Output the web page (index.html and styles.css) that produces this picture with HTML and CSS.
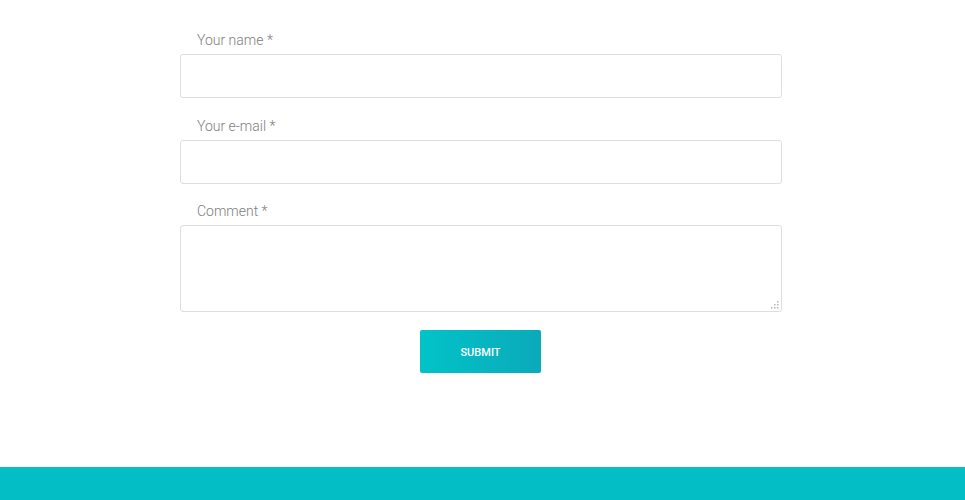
FILE: index.html
```html
<!DOCTYPE html>
<html lang="en">
<head>
<meta charset="utf-8">
<title>Comment form</title>
<link rel="stylesheet" href="styles.css">
</head>
<body>
<main class="page">
  <form class="comment-form">
    <div class="field">
      <label class="field-label" for="name">Your name *</label>
      <input class="field-input" id="name" type="text">
    </div>
    <div class="field">
      <label class="field-label" for="email">Your e-mail *</label>
      <input class="field-input" id="email" type="email">
    </div>
    <div class="field">
      <label class="field-label" for="comment">Comment *</label>
      <div class="textarea-wrap">
        <textarea class="field-input field-textarea" id="comment"></textarea>
        <svg class="grip" width="8" height="8" viewBox="0 0 8 8" aria-hidden="true">
          <rect x="6" y="0" width="1.5" height="1.5" fill="#b5b5b5"/>
          <rect x="3" y="3" width="1.5" height="1.5" fill="#b5b5b5"/>
          <rect x="6" y="3" width="1.5" height="1.5" fill="#b5b5b5"/>
          <rect x="0" y="6" width="1.5" height="1.5" fill="#b5b5b5"/>
          <rect x="3" y="6" width="1.5" height="1.5" fill="#b5b5b5"/>
          <rect x="6" y="6" width="1.5" height="1.5" fill="#b5b5b5"/>
        </svg>
      </div>
    </div>
    <div class="actions">
      <button class="submit" type="button">SUBMIT</button>
    </div>
  </form>
</main>
<footer class="footer"></footer>
</body>
</html>
```
FILE: styles.css
```css
* { box-sizing: border-box; }
html, body { margin: 0; padding: 0; background: #fff; }
body {
  font-family: Roboto, "Liberation Sans", sans-serif;
  overflow: hidden;
}
.page {
  height: 467px;
  padding-top: 30px;
}
.comment-form {
  width: 602px;
  margin-left: 180px;
}
.field {
  display: flex;
  flex-direction: column;
  margin-bottom: 17.5px;
}
.field-label {
  padding-left: 17px;
  font-size: 14px;
  font-weight: 300;
  line-height: 20px;
  color: #7d7d7d;
  margin-bottom: 4px;
}
.field-input {
  display: block;
  width: 100%;
  height: 44px;
  border: 1px solid #dedede;
  border-radius: 3px;
  background: #fff;
  font-family: inherit;
  font-size: 14px;
  padding: 0 16px;
  margin: 0;
  outline: none;
}
.textarea-wrap {
  position: relative;
}
.field-textarea {
  height: 87px;
  resize: none;
  padding: 12px 16px;
}
.grip {
  position: absolute;
  right: 3px;
  bottom: 3px;
}
.actions {
  display: flex;
  justify-content: center;
  padding-right: 1px;
  margin-top: 0.5px;
}
.submit {
  width: 121px;
  height: 43px;
  padding: 2px 0 0;
  border: none;
  border-radius: 2px;
  background: linear-gradient(to right, #02c3c8, #0aaab9);
  color: #fff;
  font-family: inherit;
  font-size: 11px;
  font-weight: 500;
  cursor: pointer;
}
.footer {
  height: 40px;
  background: #03bec5;
}
```
